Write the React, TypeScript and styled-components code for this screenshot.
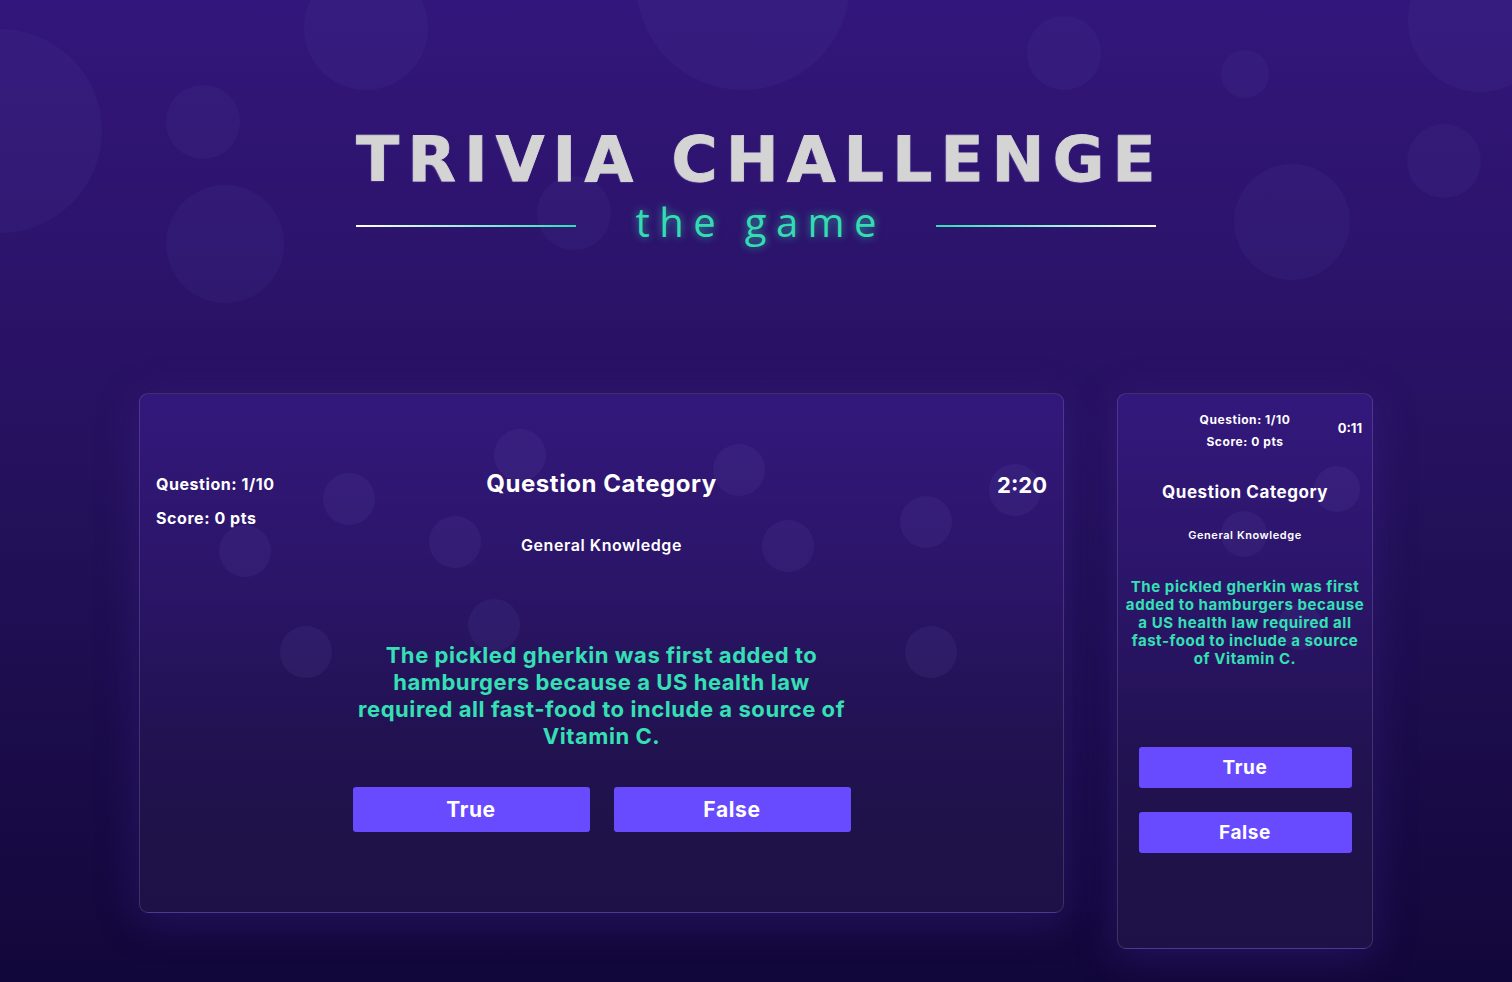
import React from "react";
import styled, { createGlobalStyle } from "styled-components";

const GlobalStyle = createGlobalStyle`
  html, body { margin: 0; padding: 0; }
  body { background: #130737; font-family: "Inter", "Noto Sans", sans-serif; }
  * { box-sizing: border-box; }
`;

const Page = styled.div`
  position: relative;
  overflow: hidden;
  min-height: 982px;
  display: flex;
  flex-direction: column;
  align-items: center;
  background: linear-gradient(180deg, #33167b 0%, #2b1369 30%, #221058 55%, #1a0b48 78%, #12073a 100%);
`;

const Bubble = styled.span<{ $x: number; $y: number; $r: number; $alpha?: number }>`
  position: absolute;
  left: ${(p) => p.$x - p.$r}px;
  top: ${(p) => p.$y - p.$r}px;
  width: ${(p) => p.$r * 2}px;
  height: ${(p) => p.$r * 2}px;
  border-radius: 50%;
  background: rgba(120, 110, 200, ${(p) => p.$alpha ?? 0.09});
  pointer-events: none;
`;

const Header = styled.header`
  position: relative;
  z-index: 1;
  padding-top: 128px;
  display: flex;
  flex-direction: column;
  align-items: center;
`;

const Title = styled.h1`
  margin: 0;
  font-family: "DejaVu Sans", "Liberation Sans", sans-serif;
  font-weight: 700;
  font-size: 63px;
  line-height: 64px;
  letter-spacing: 8.2px;
  margin-right: -8.2px;
  color: #d4d4d4;
  -webkit-text-stroke: 0.8px #d4d4d4;
  text-shadow: -1px 1px 1px rgba(130, 110, 180, 0.55);
`;

const SubRow = styled.div`
  margin-top: 10px;
  display: flex;
  align-items: center;
  gap: 60px;
`;

const Rule = styled.span<{ $flip?: boolean }>`
  display: block;
  width: 220px;
  height: 2px;
  margin-top: 7px;
  background: linear-gradient(${(p) => (p.$flip ? "270deg" : "90deg")}, #ffffff 0%, #2fdcb4 100%);
`;

const Subtitle = styled.h2`
  margin: 0;
  font-family: "Open Sans", sans-serif;
  font-weight: 500;
  font-size: 40px;
  line-height: 40px;
  letter-spacing: 9.4px;
  margin-right: -9.4px;
  color: #34dcb2;
  text-shadow: 0 0 8px rgba(46, 224, 176, 0.65);
`;

const Cards = styled.main`
  position: relative;
  z-index: 1;
  margin-top: 151px;
  display: flex;
  align-items: flex-start;
  gap: 53px;
`;

const Card = styled.section<{ $w: number }>`
  position: relative;
  width: ${(p) => p.$w}px;
  border: 1px solid rgba(255, 255, 255, 0.14);
  border-radius: 9px;
  background: linear-gradient(180deg, #33187c 0%, #2b1569 35%, #221252 65%, #1f1249 85%, #1e1147 100%);
  box-shadow: 0 8px 40px rgba(70, 40, 160, 0.35);
  overflow: hidden;
`;

const Content = styled.div<{ $pad: string }>`
  position: relative;
  z-index: 1;
  padding: ${(p) => p.$pad};
  display: flex;
  flex-direction: column;
  align-items: center;
  color: #ffffff;
  font-weight: 700;
  letter-spacing: 0.035em;
`;

const HeaderGrid = styled.div`
  width: 100%;
  display: grid;
  grid-template-columns: 1fr auto 1fr;
  align-items: start;
`;

const Stats = styled.div<{ $size: number; $lh: number; $gap: number; $align: string }>`
  display: flex;
  flex-direction: column;
  gap: ${(p) => p.$gap}px;
  align-items: ${(p) => p.$align};
  justify-self: ${(p) => p.$align};
  font-size: ${(p) => p.$size}px;
  line-height: ${(p) => p.$lh}px;
  white-space: nowrap;
`;

const Center = styled.div`
  display: flex;
  flex-direction: column;
  align-items: center;
`;

const CategoryTitle = styled.div<{ $size: number; $lh: number; $mt: number }>`
  margin-top: ${(p) => p.$mt}px;
  font-size: ${(p) => p.$size}px;
  line-height: ${(p) => p.$lh}px;
  white-space: nowrap;
`;

const Category = styled.div<{ $size: number; $lh: number; $mt: number }>`
  margin-top: ${(p) => p.$mt}px;
  font-size: ${(p) => p.$size}px;
  line-height: ${(p) => p.$lh}px;
  font-weight: 600;
  white-space: nowrap;
`;

const Timer = styled.div<{ $size: number; $lh: number; $mt: number }>`
  justify-self: end;
  margin-top: ${(p) => p.$mt}px;
  font-size: ${(p) => p.$size}px;
  line-height: ${(p) => p.$lh}px;
  letter-spacing: 0;
`;

const Question = styled.p<{ $size: number; $lh: number; $mt: number }>`
  margin: ${(p) => p.$mt}px 0 0;
  text-align: center;
  color: #35e0b5;
  font-size: ${(p) => p.$size}px;
  line-height: ${(p) => p.$lh}px;
  white-space: nowrap;
`;

const Answers = styled.div<{ $dir: "row" | "column"; $mt: number }>`
  margin-top: ${(p) => p.$mt}px;
  display: flex;
  flex-direction: ${(p) => p.$dir};
  gap: 24px;
`;

const AnswerButton = styled.button<{ $w: number; $h: number; $size: number }>`
  width: ${(p) => p.$w}px;
  height: ${(p) => p.$h}px;
  border: none;
  border-radius: 3px;
  background: #694bff;
  color: #ffffff;
  font-family: "Inter", sans-serif;
  font-weight: 700;
  letter-spacing: 0.03em;
  font-size: ${(p) => p.$size}px;
  cursor: pointer;
`;

const pageBubbles = [
  [0, 131, 102],
  [203, 122, 37],
  [225, 244, 59],
  [366, 28, 62],
  [574, 213, 37],
  [743, -17, 107],
  [1064, 53, 37],
  [1245, 74, 24],
  [1480, 20, 72],
  [1444, 161, 37],
  [1292, 222, 58],
];

const wideBubbles = [
  [380, 61], [209, 105], [105, 157], [315, 148], [599, 76], [875, 96],
  [786, 128], [648, 152], [354, 231], [791, 258], [166, 258],
];

const narrowBubbles = [
  [219, 95], [126, 140], [182, 233],
];

const wideLines = [
  "The pickled gherkin was first added to",
  "hamburgers because a US health law",
  "required all fast-food to include a source of",
  "Vitamin C.",
];

const narrowLines = [
  "The pickled gherkin was first",
  "added to hamburgers because",
  "a US health law required all",
  "fast-food to include a source",
  "of Vitamin C.",
];

function QuestionText({ lines }: { lines: string[] }) {
  return (
    <>
      {lines.map((l, i) => (
        <React.Fragment key={i}>
          {l}
          {i < lines.length - 1 && <br />}
        </React.Fragment>
      ))}
    </>
  );
}

export default function App() {
  return (
    <>
      <GlobalStyle />
      <Page>
        {pageBubbles.map(([x, y, r], i) => (
          <Bubble key={i} $x={x} $y={y} $r={r} $alpha={0.07} />
        ))}
        <Header>
          <Title>TRIVIA CHALLENGE</Title>
          <SubRow>
            <Rule />
            <Subtitle>the game</Subtitle>
            <Rule $flip />
          </SubRow>
        </Header>
        <Cards>
          <Card $w={925}>
            {wideBubbles.map(([x, y], i) => (
              <Bubble key={i} $x={x} $y={y} $r={26} $alpha={0.1} />
            ))}
            <Content $pad="80px 16px 80px">
              <HeaderGrid>
                <Stats $size={16} $lh={20} $gap={14} $align="start">
                  <span>Question: 1/10</span>
                  <span>Score: 0 pts</span>
                </Stats>
                <Center>
                  <CategoryTitle $size={24} $lh={20} $mt={0}>Question Category</CategoryTitle>
                  <Category $size={16} $lh={20} $mt={41}>General Knowledge</Category>
                </Center>
                <Timer $size={22} $lh={20} $mt={1}>2:20</Timer>
              </HeaderGrid>
              <Question $size={22} $lh={27} $mt={87}>
                <QuestionText lines={wideLines} />
              </Question>
              <Answers $dir="row" $mt={37}>
                <AnswerButton $w={237} $h={45} $size={21}>True</AnswerButton>
                <AnswerButton $w={237} $h={45} $size={21}>False</AnswerButton>
              </Answers>
            </Content>
          </Card>
          <Card $w={256}>
            {narrowBubbles.map(([x, y], i) => (
              <Bubble key={i} $x={x} $y={y} $r={23} $alpha={0.1} />
            ))}
            <Content $pad="18px 10px 95px">
              <HeaderGrid>
                <span />
                <Stats $size={12} $lh={16} $gap={6} $align="center">
                  <span>Question: 1/10</span>
                  <span>Score: 0 pts</span>
                </Stats>
                <Timer $size={13} $lh={16} $mt={8}>0:11</Timer>
              </HeaderGrid>
              <CategoryTitle $size={17} $lh={22} $mt={31}>Question Category</CategoryTitle>
              <Category $size={11} $lh={14} $mt={25}>General Knowledge</Category>
              <Question $size={15} $lh={18} $mt={36}>
                <QuestionText lines={narrowLines} />
              </Question>
              <Answers $dir="column" $mt={79}>
                <AnswerButton $w={213} $h={41} $size={19}>True</AnswerButton>
                <AnswerButton $w={213} $h={41} $size={19}>False</AnswerButton>
              </Answers>
            </Content>
          </Card>
        </Cards>
      </Page>
    </>
  );
}
